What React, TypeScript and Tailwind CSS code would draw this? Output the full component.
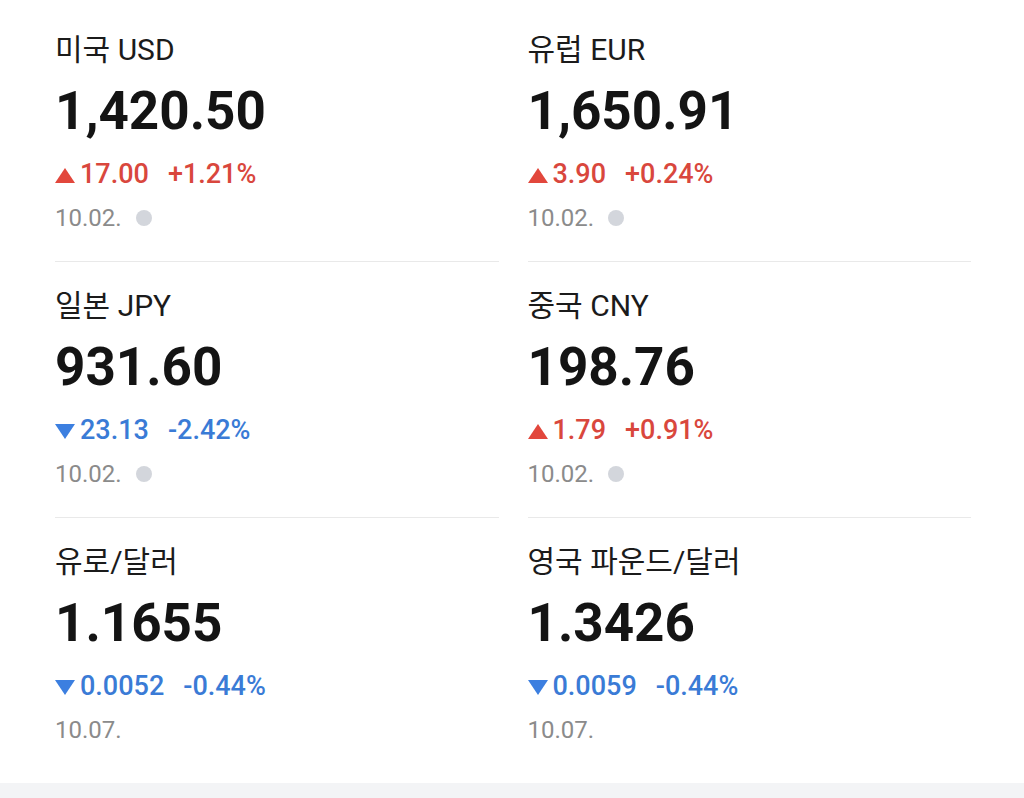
import React from "react";

type Rate = {
  name: string;
  value: string;
  diff: string;
  pct: string;
  up: boolean;
  date: string;
  dot: boolean;
};

const rates: Rate[] = [
  { name: "미국 USD", value: "1,420.50", diff: "17.00", pct: "+1.21%", up: true, date: "10.02.", dot: true },
  { name: "유럽 EUR", value: "1,650.91", diff: "3.90", pct: "+0.24%", up: true, date: "10.02.", dot: true },
  { name: "일본 JPY", value: "931.60", diff: "23.13", pct: "-2.42%", up: false, date: "10.02.", dot: true },
  { name: "중국 CNY", value: "198.76", diff: "1.79", pct: "+0.91%", up: true, date: "10.02.", dot: true },
  { name: "유로/달러", value: "1.1655", diff: "0.0052", pct: "-0.44%", up: false, date: "10.07.", dot: false },
  { name: "영국 파운드/달러", value: "1.3426", diff: "0.0059", pct: "-0.44%", up: false, date: "10.07.", dot: false },
];

function Arrow({ up }: { up: boolean }) {
  return (
    <svg
      width="20"
      height="15"
      viewBox="0 0 20 15"
      className="inline align-baseline mr-[5px]"
    >
      {up ? (
        <polygon points="10,0 20,15 0,15" fill="#e2473c" />
      ) : (
        <polygon points="0,0 20,0 10,15" fill="#3c7fe0" />
      )}
    </svg>
  );
}

function RateCell({ rate, last }: { rate: Rate; last: boolean }) {
  const color = rate.up ? "text-[#d9473d]" : "text-[#3a7bd6]";
  return (
    <div className={`pt-[26px] pb-[29px] ${last ? "" : "border-b border-[#e9e9e9]"}`}>
      <div className="h-9 leading-[36px] text-[30px] text-[#1b1b1b] whitespace-nowrap">
        {rate.name}
      </div>
      <div className="mt-[11px] h-16 leading-[64px] text-[53px] font-bold text-[#141414]">
        {rate.value}
      </div>
      <div className={`mt-[15px] h-8 leading-[32px] text-[27px] font-medium ${color}`}>
        <Arrow up={rate.up} />
        <span>{rate.diff}</span>
        <span className="ml-[19px]">{rate.pct}</span>
      </div>
      <div className="mt-[14px] h-7 leading-[28px] text-[24px] text-[#8b8b8b] flex items-center">
        <span>{rate.date}</span>
        {rate.dot && (
          <span className="ml-[14px] inline-block w-4 h-4 rounded-full bg-[#d3d6dc]" />
        )}
      </div>
    </div>
  );
}

export default function App() {
  return (
    <div
      className="w-[1024px] h-[798px] bg-white overflow-hidden"
      style={{ fontFamily: 'Roboto, "Noto Sans CJK KR", sans-serif' }}
    >
      <div className="grid grid-cols-2 gap-x-[29px] pl-[55px] pr-[53px] pt-[6px] pb-[10px]">
        {rates.map((r, i) => (
          <RateCell key={r.name} rate={r} last={i >= 4} />
        ))}
      </div>
      <div className="h-[15px] bg-[#f3f4f6]" />
    </div>
  );
}
